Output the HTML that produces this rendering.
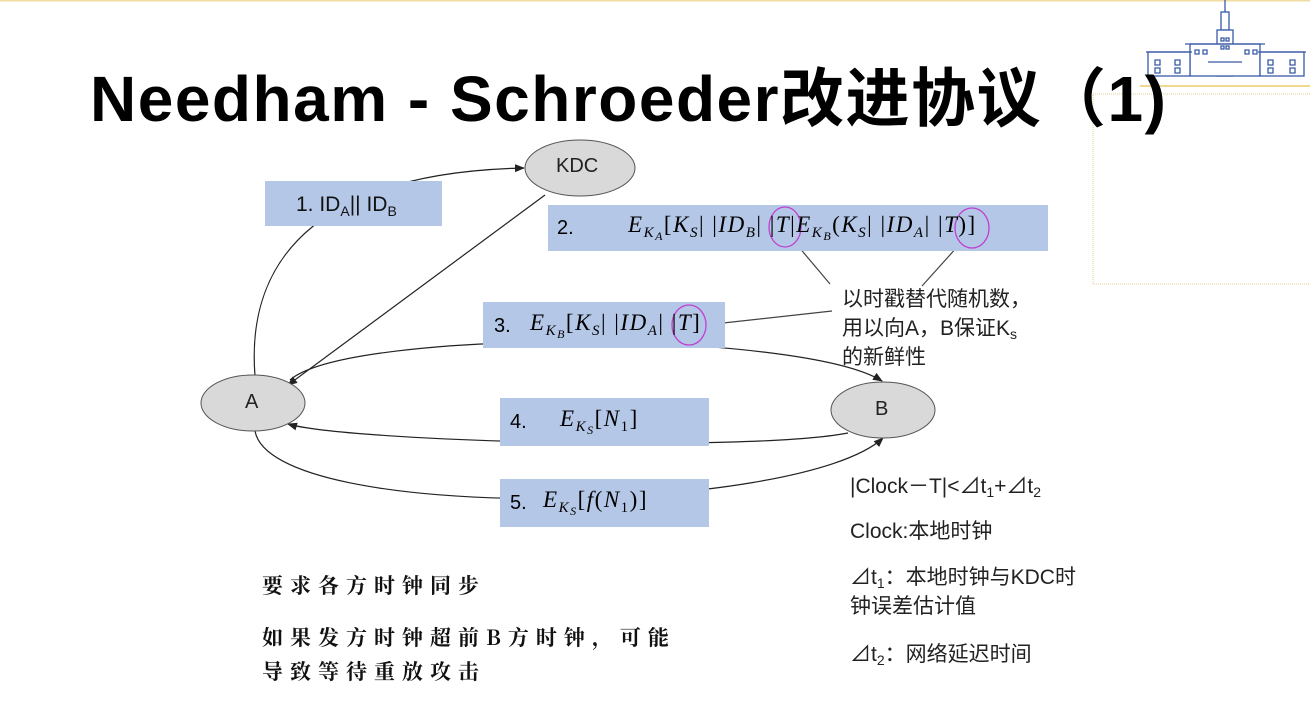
<!DOCTYPE html>
<html><head><meta charset="utf-8"><style>
body{margin:0;width:1310px;height:720px;overflow:hidden;background:#fff;position:relative;font-family:"Liberation Sans","Noto Sans CJK SC",sans-serif;}
.a{position:absolute;white-space:nowrap;}
.box{position:absolute;background:#b4c7e7;}
.m{font-family:"Liberation Serif",serif;font-style:italic;font-size:23px;letter-spacing:1.5px;}
.m sub{font-size:15px;vertical-align:-5px;line-height:0;}
.m sub sub{font-size:12px;vertical-align:-3px;}
.r{font-style:normal;}
.n{font-family:"Liberation Sans",sans-serif;font-style:normal;font-size:20px;letter-spacing:0;}
.t{font-size:21px;color:#222;line-height:29px;}
.t sub{font-size:14px;line-height:0;vertical-align:-4px;}
.b{font-family:"Noto Serif CJK SC","WenQuanYi Zen Hei",serif;font-weight:bold;font-size:21px;letter-spacing:7px;color:#111;}
</style></head><body>
<svg class="a" style="left:0;top:0" width="1310" height="720">
<defs><marker id="ar" markerWidth="10" markerHeight="8" refX="9" refY="4" orient="auto" markerUnits="userSpaceOnUse"><path d="M0,0 L10,4 L0,8 z" fill="#222"/></marker></defs>
<line x1="0" y1="0.5" x2="1310" y2="0.5" stroke="#f0dca0" stroke-width="2"/>
<line x1="1140" y1="86" x2="1310" y2="86" stroke="#f0d890" stroke-width="2"/>
<rect x="1093" y="94" width="230" height="190" fill="none" stroke="#e0cc90" stroke-dasharray="1,1"/>
<g stroke="#3a5aa8" fill="#fff" stroke-width="1.3">
<line x1="1225" y1="0" x2="1225" y2="12"/>
<rect x="1221" y="12" width="8" height="18"/>
<rect x="1217" y="30" width="16" height="46"/>
<rect x="1190" y="44" width="70" height="32"/>
<rect x="1148" y="52" width="42" height="24"/>
<rect x="1260" y="52" width="44" height="24"/>
<path d="M1185,44 L1265,44 M1146,52 L1192,52 M1258,52 L1306,52 M1208,62 L1242,62"/>
<path d="M1155,60h5v5h-5z M1155,68h5v5h-5z M1175,60h5v5h-5zM1175,68h5v5h-5zM1195,50h4v4h-4zM1203,50h4v4h-4zM1245,50h4v4h-4zM1253,50h4v4h-4zM1268,60h5v5h-5zM1268,68h5v5h-5zM1290,60h5v5h-5zM1290,68h5v5h-5zM1221,38h3v3h-3zM1226,38h3v3h-3zM1221,46h3v3h-3zM1226,46h3v3h-3z"/>
</g>
<g fill="none" stroke="#222" stroke-width="1.2">
<path d="M255,376 C245,250 330,172 524,168" marker-end="url(#ar)"/>
<path d="M545,195 L288,385" marker-end="url(#ar)"/>
<path d="M290,380 C350,328 800,330 882,381" marker-end="url(#ar)"/>
<path d="M848,433 C750,452 350,442 288,424" marker-end="url(#ar)"/>
<path d="M255,431 C272,525 800,515 883,438" marker-end="url(#ar)"/>
<path d="M798,246 L830,284 M958,246 L922,286 M705,325 L832,311" stroke="#444"/>
</g>
</svg>
<div class="box" style="left:265px;top:181px;width:177px;height:45px"></div>
<div class="box" style="left:548px;top:205px;width:500px;height:46px"></div>
<div class="box" style="left:483px;top:302px;width:242px;height:46px"></div>
<div class="box" style="left:500px;top:398px;width:209px;height:48px"></div>
<div class="box" style="left:500px;top:479px;width:209px;height:48px"></div>
<svg class="a" style="left:0;top:0" width="1310" height="720">
<ellipse cx="580" cy="168" rx="55" ry="28" fill="#d9d9d9" stroke="#555"/>
<ellipse cx="253" cy="403" rx="52" ry="28" fill="#d9d9d9" stroke="#555"/>
<ellipse cx="883" cy="410" rx="52" ry="28" fill="#d9d9d9" stroke="#555"/>
<g fill="none" stroke="#c040d0" stroke-width="1.3">
<ellipse cx="785" cy="227" rx="16" ry="20"/>
<ellipse cx="972" cy="228" rx="17" ry="20"/>
<ellipse cx="689" cy="325" rx="17" ry="20"/>
</g>
</svg>
<div class="a" style="left:90px;top:48px;font-size:64px;font-weight:bold;color:#000;letter-spacing:1.5px">Needham - Schroeder改进协议（1)</div>
<div class="a" style="left:556px;top:155px;font-size:20px;color:#222">KDC</div>
<div class="a" style="left:245px;top:391px;font-size:20px;color:#222">A</div>
<div class="a" style="left:875px;top:398px;font-size:20px;color:#222">B</div>
<div class="a" style="left:296px;top:193px;font-size:21px;color:#111">1. ID<sub style="font-size:14px;line-height:0">A</sub>|| ID<sub style="font-size:14px;line-height:0">B</sub></div>
<div class="a n" style="left:557px;top:217px">2.</div>
<div class="a m" style="left:628px;top:212px">E<sub>K<sub>A</sub></sub><span class="r">[</span>K<sub>S</sub><span class="r">| |</span>ID<sub>B</sub><span class="r">| |</span>T<span class="r">|</span>E<sub>K<sub>B</sub></sub><span class="r">(</span>K<sub>S</sub><span class="r">| |</span>ID<sub>A</sub><span class="r">| |</span>T<span class="r">)]</span></div>
<div class="a n" style="left:494px;top:315px">3.</div>
<div class="a m" style="left:530px;top:310px">E<sub>K<sub>B</sub></sub><span class="r">[</span>K<sub>S</sub><span class="r">| |</span>ID<sub>A</sub><span class="r">| |</span>T<span class="r">]</span></div>
<div class="a n" style="left:510px;top:411px">4.</div>
<div class="a m" style="left:560px;top:406px">E<sub>K<sub>S</sub></sub><span class="r">[</span>N<sub class="r">1</sub><span class="r">]</span></div>
<div class="a n" style="left:510px;top:492px">5.</div>
<div class="a m" style="left:543px;top:487px">E<sub>K<sub>S</sub></sub><span class="r">[</span>f<span class="r">(</span>N<sub class="r">1</sub><span class="r">)]</span></div>
<div class="a t" style="left:842px;top:285px">以时戳替代随机数，<br>用以向A，B保证K<sub>s</sub><br>的新鲜性</div>
<div class="a t" style="left:850px;top:472px">|Clock－T|&lt;⊿t<sub>1</sub>+⊿t<sub>2</sub></div>
<div class="a t" style="left:850px;top:517px">Clock:本地时钟</div>
<div class="a t" style="left:850px;top:563px">⊿t<sub>1</sub>：本地时钟与KDC时<br>钟误差估计值</div>
<div class="a t" style="left:850px;top:640px">⊿t<sub>2</sub>：网络延迟时间</div>
<div class="a b" style="left:262px;top:570px">要求各方时钟同步</div>
<div class="a b" style="left:262px;top:620px;line-height:34px">如果发方时钟超前B方时钟，可能<br>导致等待重放攻击</div>
</body></html>
